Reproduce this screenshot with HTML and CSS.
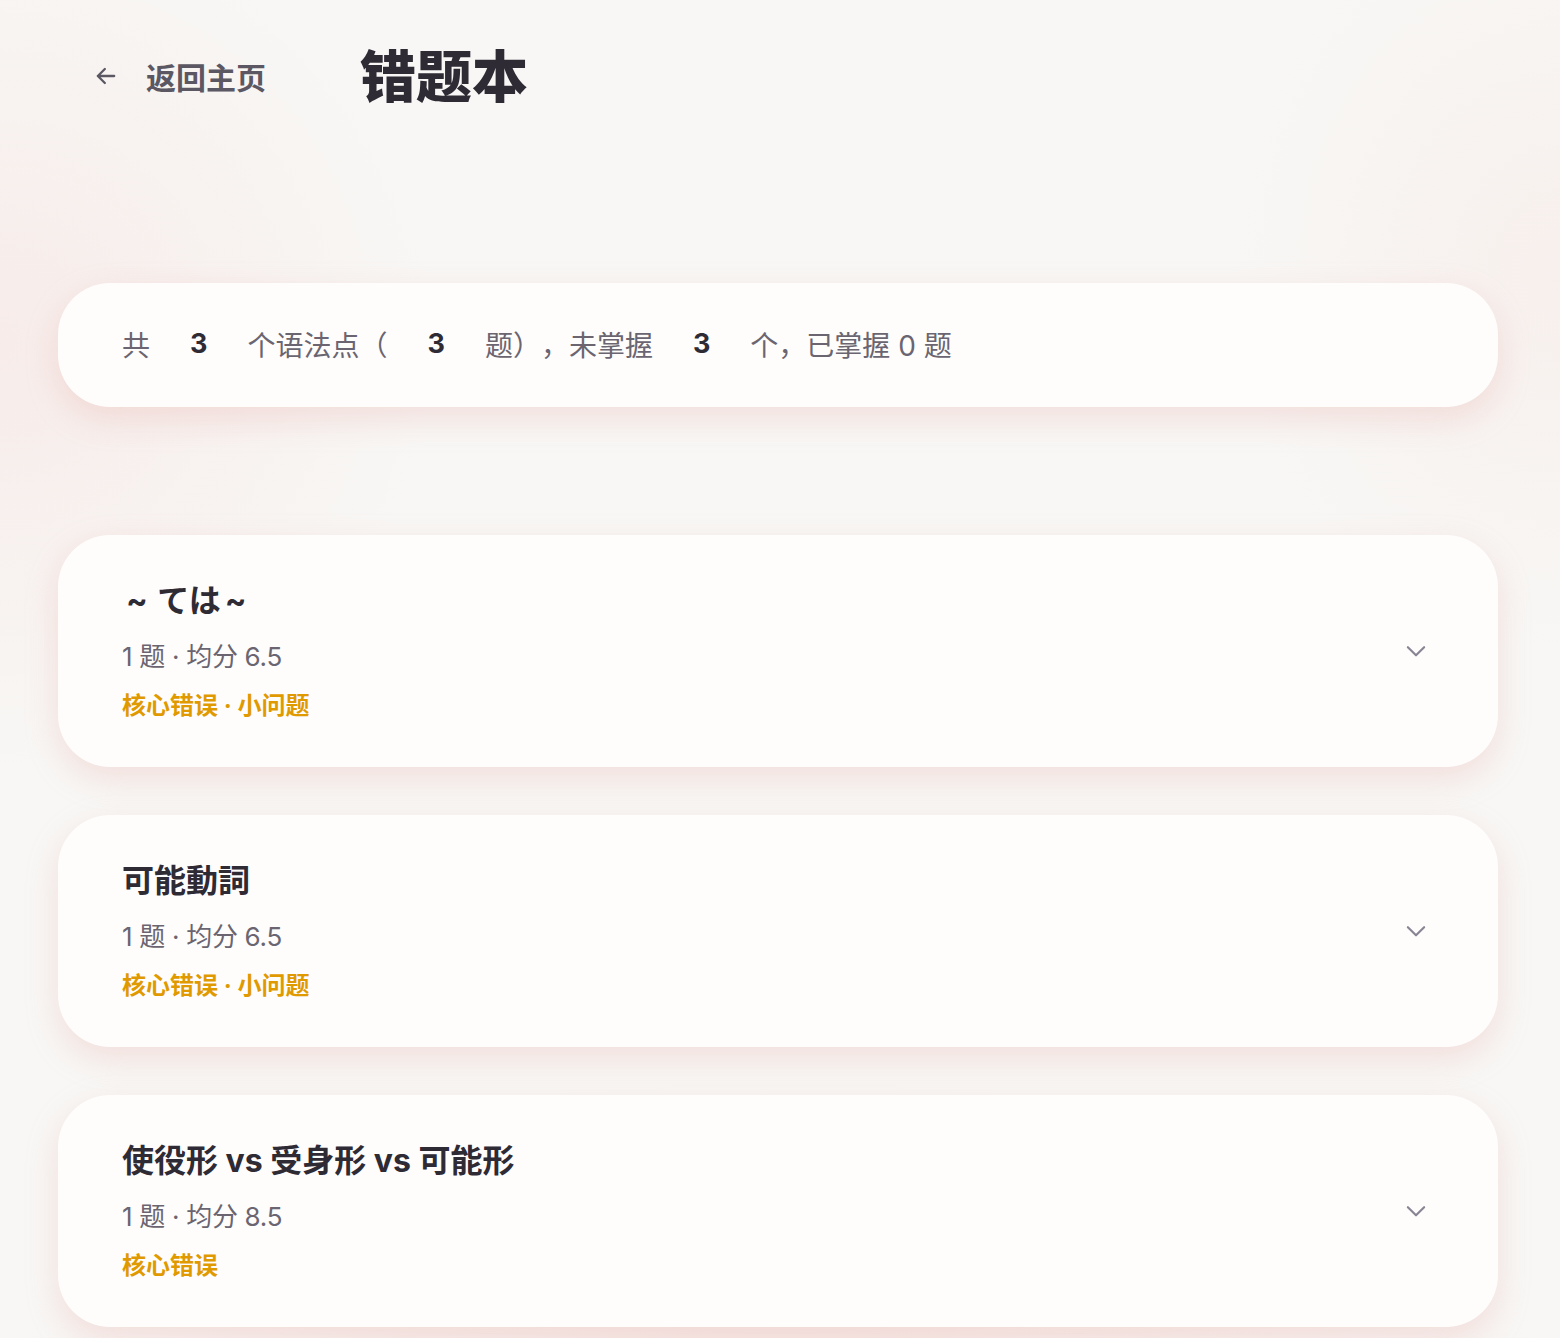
FILE: index.html
```html
<!DOCTYPE html>
<html lang="zh-CN">
<head>
<meta charset="utf-8">
<title>错题本</title>
<link rel="stylesheet" href="styles.css">
</head>
<body>
<div class="page">
  <header class="topbar">
    <a class="back" href="#">
      <svg class="back-icon" viewBox="0 0 24 24" width="28" height="28" aria-hidden="true">
        <path d="M19 12H5M11 6l-6 6 6 6" fill="none" stroke="currentColor" stroke-width="2" stroke-linecap="round" stroke-linejoin="round"/>
      </svg>
      <span>返回主页</span>
    </a>
    <h1 class="title">错题本</h1>
  </header>

  <section class="summary">
    共<b class="num">3</b>个语法点（<b class="num">3</b>题），未掌握<b class="num">3</b>个，已掌握 0 题
  </section>

  <ul class="list">
    <li class="card">
      <div class="card-body">
        <h2 class="card-title" lang="ja"><span class="tilde">~</span> ては<span class="tilde">~</span></h2>
        <p class="card-meta">1 题 · 均分 6.5</p>
        <p class="card-tags">核心错误 · 小问题</p>
      </div>
      <svg class="chevron" viewBox="0 0 24 24" width="26" height="26" aria-hidden="true">
        <path d="M4.5 8.5l7.5 7.5 7.5-7.5" fill="none" stroke="currentColor" stroke-width="2" stroke-linecap="round" stroke-linejoin="round"/>
      </svg>
    </li>
    <li class="card">
      <div class="card-body">
        <h2 class="card-title" lang="ja">可能動詞</h2>
        <p class="card-meta">1 题 · 均分 6.5</p>
        <p class="card-tags">核心错误 · 小问题</p>
      </div>
      <svg class="chevron" viewBox="0 0 24 24" width="26" height="26" aria-hidden="true">
        <path d="M4.5 8.5l7.5 7.5 7.5-7.5" fill="none" stroke="currentColor" stroke-width="2" stroke-linecap="round" stroke-linejoin="round"/>
      </svg>
    </li>
    <li class="card">
      <div class="card-body">
        <h2 class="card-title" lang="ja">使役形 vs 受身形 vs 可能形</h2>
        <p class="card-meta">1 题 · 均分 8.5</p>
        <p class="card-tags">核心错误</p>
      </div>
      <svg class="chevron" viewBox="0 0 24 24" width="26" height="26" aria-hidden="true">
        <path d="M4.5 8.5l7.5 7.5 7.5-7.5" fill="none" stroke="currentColor" stroke-width="2" stroke-linecap="round" stroke-linejoin="round"/>
      </svg>
    </li>
  </ul>
</div>
</body>
</html>
```

FILE: styles.css
```css
* { box-sizing: border-box; }

html, body {
  margin: 0;
  padding: 0;
}

body {
  min-height: 100vh;
  font-family: "Inter", "Noto Sans CJK SC", "Noto Sans CJK JP", sans-serif;
  text-spacing-trim: space-all;
  color: #2f2b35;
  background:
    radial-gradient(ellipse 40% 45% at 0% 25%, rgba(246, 225, 222, 0.5), rgba(246, 225, 222, 0) 70%),
    radial-gradient(ellipse 30% 40% at 100% 20%, rgba(246, 228, 224, 0.4), rgba(246, 228, 224, 0) 70%),
    radial-gradient(ellipse 70% 30% at 50% 100%, rgba(245, 218, 214, 0.45), rgba(245, 218, 214, 0) 70%),
    #f8f7f5;
}

.page {
  width: 1440px;
  margin-left: 58px;
  padding-bottom: 40px;
}

.topbar {
  display: flex;
  align-items: center;
  height: 152px;
  padding-left: 34px;
}

.back {
  display: flex;
  align-items: center;
  gap: 26px;
  color: #5c5863;
  text-decoration: none;
  font-size: 30px;
  font-weight: 700;
}

.back-icon { color: #5c5863; }

.title {
  margin: 2px 0 0 94px;
  font-size: 56px;
  font-weight: 800;
  color: #2f2b35;
  line-height: 1;
}

.summary {
  margin-top: 131px;
  height: 124px;
  display: flex;
  align-items: center;
  padding: 0 64px 3px;
  background: #fefdfc;
  border-radius: 52px;
  box-shadow: 0 12px 32px rgba(226, 160, 156, 0.28);
  font-size: 28px;
  color: #6a6570;
}

.num {
  margin: 0 40px;
  font-weight: 700;
  color: #2f2b35;
  font-size: 27px;
}

.list {
  list-style: none;
  margin: 128px 0 0;
  padding: 0;
  display: flex;
  flex-direction: column;
  gap: 48px;
}

.card {
  display: flex;
  align-items: center;
  justify-content: space-between;
  padding: 44px 69px 44px 64px;
  background: #fefdfc;
  border-radius: 52px;
  box-shadow: 0 12px 32px rgba(226, 160, 156, 0.28);
}

.card-title {
  margin: 0;
  font-family: "Inter", "Noto Sans CJK JP", "Noto Sans CJK SC", sans-serif;
  font-size: 32px;
  line-height: 44px;
  font-weight: 700;
  color: #2f2b35;
}

.tilde {
  display: inline-block;
  margin: 0 2px 0 4px;
}

.card-meta {
  margin: 16px 0 0;
  font-size: 26px;
  line-height: 36px;
  letter-spacing: -0.3px;
  color: #6a6570;
}

.card-tags {
  margin: 14px 0 0;
  font-size: 24px;
  line-height: 34px;
  font-weight: 700;
  color: #e09a00;
}

.chevron {
  color: #8a8594;
}
```
